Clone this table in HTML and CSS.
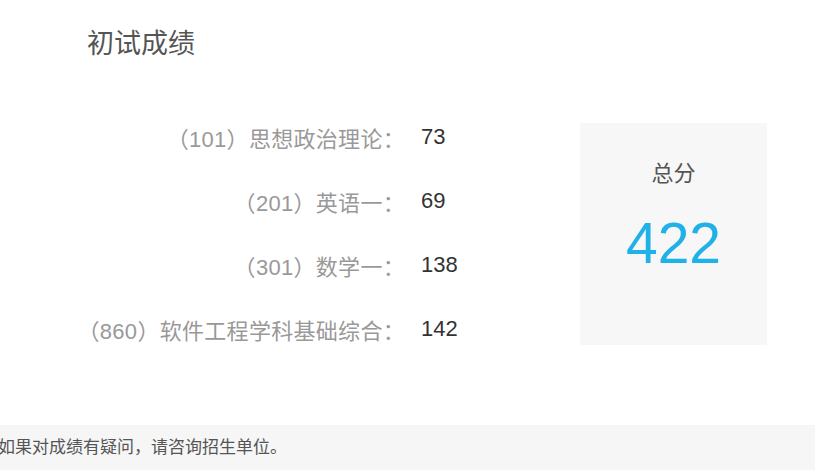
FILE: index.html
```html
<!DOCTYPE html>
<html lang="zh-CN">
<head>
<meta charset="utf-8">
<link rel="stylesheet" href="styles.css">
</head>
<body>
<div class="page">
  <h2 class="title">初试成绩</h2>
  <div class="scores">
    <div class="subjects">
      <div class="label">（101）思想政治理论：</div><div class="value">73</div>
      <div class="label">（201）英语一：</div><div class="value">69</div>
      <div class="label">（301）数学一：</div><div class="value">138</div>
      <div class="label">（860）软件工程学科基础综合：</div><div class="value">142</div>
    </div>
    <div class="total">
      <div class="total-label">总分</div>
      <div class="total-value">422</div>
    </div>
  </div>
  <div class="notice">如果对成绩有疑问，请咨询招生单位。</div>
</div>
</body>
</html>
```
FILE: styles.css
```css
html, body {
  margin: 0;
  padding: 0;
  background: #fff;
}
body {
  font-family: "Liberation Sans", "Noto Sans CJK SC", sans-serif;
  overflow: hidden;
}
.page {
  width: 815px;
  height: 470px;
  display: flex;
  flex-direction: column;
}
.title {
  margin: 0;
  padding: 24px 0 0 87px;
  font-size: 27px;
  font-weight: normal;
  line-height: 40px;
  color: #555;
}
.scores {
  display: flex;
  align-items: center;
  margin-top: 41px;
  height: 256px;
}
.subjects {
  display: grid;
  grid-template-columns: 405px auto;
  grid-auto-rows: 64px;
  column-gap: 16px;
  align-items: center;
  width: 580px;
}
.label {
  text-align: right;
  font-size: 22px;
  letter-spacing: 0.3px;
  color: #999;
}
.value {
  font-size: 22px;
  color: #333;
}
.total {
  width: 187px;
  height: 222px;
  margin-top: 2px;
  background: #f7f7f7;
  text-align: center;
  box-sizing: border-box;
  padding-top: 37px;
}
.total-label {
  font-size: 22px;
  line-height: 28px;
  color: #555;
}
.total-value {
  margin-top: 22px;
  font-size: 57px;
  line-height: 66px;
  color: #1fb1e8;
}
.notice {
  margin-top: auto;
  height: 45px;
  background: #f6f6f6;
  font-size: 17px;
  line-height: 45px;
  color: #555;
  text-indent: -2px;
}
```
